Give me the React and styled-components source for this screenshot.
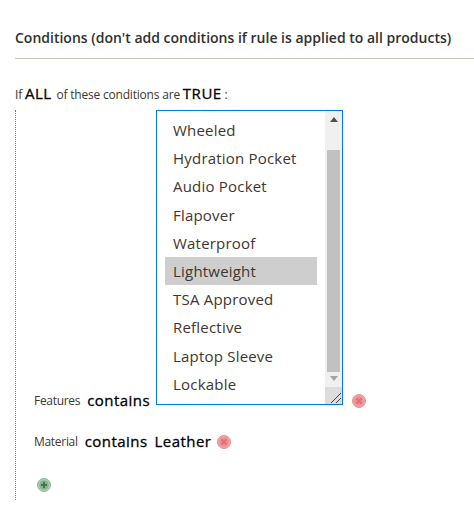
import React from "react";
import styled, { createGlobalStyle } from "styled-components";

const Global = createGlobalStyle`
  html, body { margin: 0; padding: 0; background: #fff; }
  body { font-family: "Open Sans", sans-serif; width: 474px; height: 532px; overflow: hidden; }
`;
const Page = styled.div`
  padding: 28px 0 0 15px;
  color: #41362f;
`;
const Title = styled.h2`
  margin: 0;
  font-size: 14px;
  line-height: 20px;
  font-weight: 600;
  color: #303030;
  white-space: nowrap;
`;
const Rule = styled.hr`
  margin: 10px 0 0;
  border: 0;
  height: 1px;
  background: #cdc5ba;
`;
const Lead = styled.div`
  margin-top: 24px;
  display: flex;
  align-items: baseline;
  font-size: 12px;
  line-height: 20px;
  letter-spacing: -0.2px;
  color: #41362f;
  white-space: pre;
`;
const Strong = styled.strong`
  font-size: 15px;
  font-weight: 400;
  -webkit-text-stroke: 0.3px #000;
  color: #000;
  letter-spacing: 0.5px;
  margin: ${p => p.$m || "0"};
`;
const Tree = styled.div`
  margin-top: 5px;
  border-left: 1px dotted #777;
  padding: 0 0 0 18px;
  height: 390px;
`;
const Row = styled.div`
  display: flex;
  align-items: flex-end;
  margin-top: ${p => p.$mt || "0"};
`;
const Label = styled.span`
  font-size: 12px;
  line-height: 18px;
  letter-spacing: -0.3px;
  color: #41362f;
  margin-right: 7px;
`;
const Value = styled.span`
  font-size: 15px;
  line-height: 20px;
  font-weight: 400;
  -webkit-text-stroke: 0.3px #000;
  letter-spacing: 0.45px;
  color: #000;
  margin-right: ${p => p.$mr || "0"};
`;
const ListBox = styled.div`
  width: 187px;
  height: 295px;
  box-sizing: border-box;
  border: 1px solid #007bdb;
  margin: 0 0 5px 6px;
  display: flex;
  position: relative;
  background: #fff;
`;
const Items = styled.ul`
  list-style: none;
  margin: 0;
  padding: 5px 8px 0 8px;
  flex: 1;
`;
const Item = styled.li`
  height: 28.2px;
  line-height: 28px;
  padding-left: 8px;
  font-size: 15px;
  letter-spacing: 0.2px;
  color: #41362f;
  background: ${p => (p.$on ? "#cecece" : "transparent")};
`;
const Bar = styled.div`
  width: 17px;
  background: #f0f0f0;
  display: flex;
  flex-direction: column;
  align-items: center;
`;
const Arrow = styled.div`
  height: ${p => p.$h};
  width: 100%;
  display: flex;
  align-items: center;
  justify-content: center;
`;
const Thumb = styled.div`
  width: 13px;
  height: 222px;
  margin-top: 22px;
  background: #c1c1c1;
`;
const Grip = styled.div`
  position: absolute;
  right: 0;
  bottom: 0;
  width: 17px;
  height: 17px;
  background: #dcdcdc;
`;
const IconWrap = styled.span`
  display: inline-flex;
  margin-left: ${p => p.$ml || "0"};
  margin-bottom: ${p => p.$mb || "0"};
`;
const AddRow = styled.div`
  margin: 27px 0 0 3px;
  display: flex;
`;

const Del = () => (
  <svg width="14" height="14" viewBox="0 0 14 14">
    <circle cx="7" cy="7" r="6.5" fill="#f0a6a6" stroke="#e98f8f" strokeWidth="1" />
    <circle cx="7" cy="7" r="5" fill="#ee9294" />
    <path d="M4.5 4.5L9.5 9.5M9.5 4.5L4.5 9.5" stroke="#e06f73" strokeWidth="1.8" />
  </svg>
);
const Add = () => (
  <svg width="14" height="14" viewBox="0 0 14 14">
    <circle cx="7" cy="7" r="6.5" fill="#b4cfb7" stroke="#8fb296" strokeWidth="1" />
    <circle cx="7" cy="7" r="4.8" fill="#8cb292" />
    <path d="M7 4V10M4 7H10" stroke="#37803f" strokeWidth="2" />
  </svg>
);

const items = ["Wheeled","Hydration Pocket","Audio Pocket","Flapover","Waterproof","Lightweight","TSA Approved","Reflective","Laptop Sleeve","Lockable"];

export default function App() {
  return (
    <Page>
      <Global />
      <Title>Conditions (don't add conditions if rule is applied to all products)</Title>
      <Rule />
      <Lead>If <Strong $m="0 2px 0 0">ALL</Strong> of these conditions are <Strong>TRUE</Strong> :</Lead>
      <Tree>
        <Row>
          <Label>Features</Label>
          <Value>contains</Value>
          <ListBox>
            <Items>
              {items.map(t => <Item key={t} $on={t === "Lightweight"}>{t}</Item>)}
            </Items>
            <Bar>
              <Arrow $h="17px"><svg width="8" height="5" viewBox="0 0 8 5"><path d="M0 5L4 0L8 5Z" fill="#505050" /></svg></Arrow>
              <Thumb />
              <Arrow $h="13px"><svg width="8" height="5" viewBox="0 0 8 5"><path d="M0 0L8 0L4 5Z" fill="#a3a3a3" /></svg></Arrow>
            </Bar>
            <Grip>
              <svg width="17" height="17" viewBox="0 0 17 17"><path d="M6 16L16 6M11 16L16 11" stroke="#444" strokeWidth="1" /></svg>
            </Grip>
          </ListBox>
          <IconWrap $ml="9px" $mb="2px"><Del /></IconWrap>
        </Row>
        <Row $mt="21px">
          <Label>Material</Label>
          <Value $mr="7px">contains</Value>
          <Value $mr="6px">Leather</Value>
          <IconWrap $mb="2px"><Del /></IconWrap>
        </Row>
        <AddRow><IconWrap><Add /></IconWrap></AddRow>
      </Tree>
    </Page>
  );
}
